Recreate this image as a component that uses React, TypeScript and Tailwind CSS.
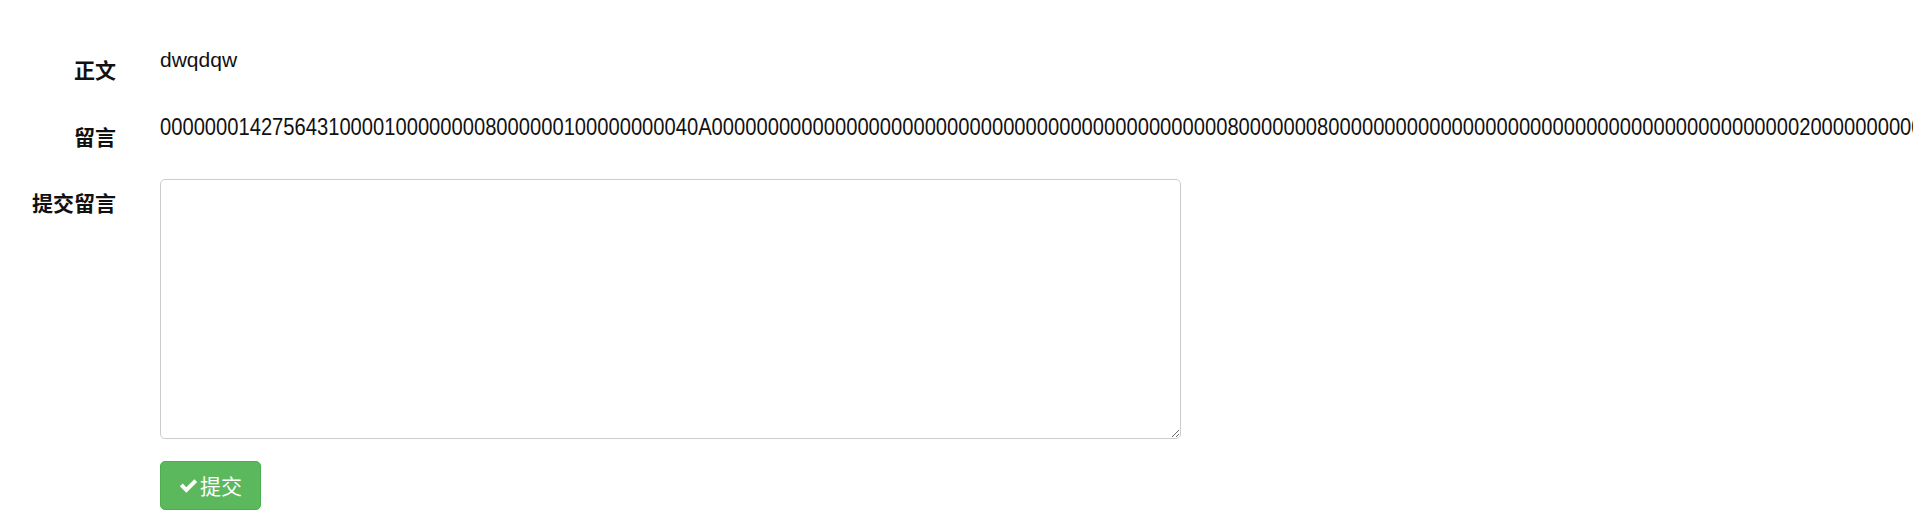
import React from "react";

const MSG =
  "000000014275643100001000000008000000100000000040A" +
  "0".repeat(46) +
  "8" +
  "0000000" +
  "8" +
  "0".repeat(42) +
  "2" +
  "0".repeat(40);

function FormRow({ label, children, className = "" }: { label: string; children: React.ReactNode; className?: string }) {
  return (
    <div className={`flex ${className}`}>
      <label className="w-[116px] shrink-0 text-right font-bold text-[21px] leading-[28px] pt-[11px] text-[#111]">
        {label}
      </label>
      <div className="ml-[44px] min-w-0">{children}</div>
    </div>
  );
}

export default function App() {
  return (
    <div
      className="w-full h-[513px] overflow-hidden bg-white"
      style={{ fontFamily: '"Liberation Sans", "Noto Sans CJK SC", sans-serif' }}
    >
      <form className="pt-[46px]">
        {/* 正文 */}
        <FormRow label="正文" className="h-[46px] mb-[21px]">
          <p className="text-[21px] leading-[28px] text-[#111] whitespace-nowrap">dwqdqw</p>
        </FormRow>

        {/* 留言 */}
        <FormRow label="留言" className="h-[45px] mb-[21px]">
          <p className="text-[24px] leading-[28px] text-[#111] whitespace-nowrap origin-left scale-x-[0.84]">{MSG}</p>
        </FormRow>

        {/* 提交留言 */}
        <FormRow label="提交留言" className="mb-[22px]">
          <textarea className="block w-[1021px] h-[260px] border border-[#ccc] rounded-[5px] bg-white px-3 py-2 text-[20px] outline-none" />
        </FormRow>

        <div className="pl-[160px]">
          <button
            type="button"
            className="flex items-center justify-center gap-[2px] w-[101px] h-[49px] rounded-[5px] bg-[#5cb85c] border border-[#4cae4c] text-white text-[21px] leading-none"
          >
            <svg viewBox="0 0 18 15" className="w-[19px] h-[16px]" fill="currentColor">
              <path d="M0.8 7.8 L3.5 5.1 L7 8.6 L14.5 1.1 L17.2 3.8 L7 14 Z" />
            </svg>
            <span style={{ fontFamily: '"Noto Sans CJK SC", sans-serif' }}>提交</span>
          </button>
        </div>
      </form>
    </div>
  );
}
